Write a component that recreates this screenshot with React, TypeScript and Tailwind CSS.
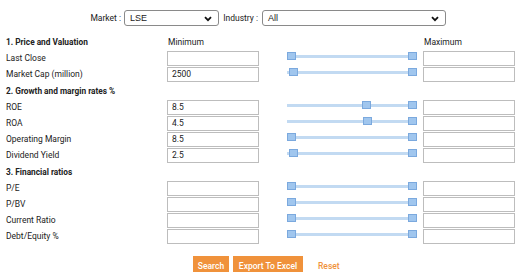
import React from "react";

const font = { fontFamily: "Roboto, 'Noto Sans', Arial, sans-serif" };

type Row = { label: string; value: string; l: number; r: number };

const sections: { title: string; rows: Row[] }[] = [
  {
    title: "1. Price and Valuation",
    rows: [
      { label: "Last Close", value: "", l: 0, r: 121 },
      { label: "Market Cap (million)", value: "2500", l: 2, r: 121 },
    ],
  },
  {
    title: "2. Growth and margin rates %",
    rows: [
      { label: "ROE", value: "8.5", l: 75, r: 121 },
      { label: "ROA", value: "4.5", l: 76, r: 121 },
      { label: "Operating Margin", value: "8.5", l: 0, r: 121 },
      { label: "Dividend Yield", value: "2.5", l: 2, r: 121 },
    ],
  },
  {
    title: "3. Financial ratios",
    rows: [
      { label: "P/E", value: "", l: 0, r: 121 },
      { label: "P/BV", value: "", l: 0, r: 121 },
      { label: "Current Ratio", value: "", l: 0, r: 121 },
      { label: "Debt/Equity %", value: "", l: 0, r: 121 },
    ],
  },
];

function Chevron() {
  return (
    <svg width="8" height="6" viewBox="0 0 8 6" className="pointer-events-none absolute right-[6px] top-[5px]">
      <path d="M1 1.2 L4 4.2 L7 1.2" fill="none" stroke="#111" strokeWidth="1.8" />
    </svg>
  );
}

function Slider({ l, r }: { l: number; r: number }) {
  return (
    <div className="relative h-[15px] w-[164px] shrink-0">
      <div className="absolute left-[28px] top-[4px] h-[3px] w-[129px] bg-[#c2daf2]" />
      <div
        className="absolute top-[1px] h-[8px] w-[9px] border border-[#7ba9de] bg-[#a0c6ee]"
        style={{ left: 28 + l }}
      />
      <div
        className="absolute top-[1px] h-[8px] w-[9px] border border-[#7ba9de] bg-[#a0c6ee]"
        style={{ left: 28 + r }}
      />
    </div>
  );
}

function Input({ value }: { value: string }) {
  return (
    <div className="flex h-[15px] w-[92px] shrink-0 items-center border border-[#bdbdbd] bg-white pl-[4px] text-[8.5px] text-[#222]">
      {value}
    </div>
  );
}

const selFont = { fontFamily: "'Liberation Sans', Arial, sans-serif" };

export default function App() {
  return (
    <div className="h-[272px] w-[520px] overflow-hidden bg-white text-[#222]" style={font}>
      <div className="flex h-[34px] items-start pt-[10px] text-[8.5px]">
        <span className="mt-[2px] w-[124px] shrink-0 whitespace-nowrap pr-[3px] text-right">Market :</span>
        <div className="relative h-[16px] w-[95px] shrink-0 rounded-[3px] border border-[#8a8a8a] bg-white pl-[5px] text-[9px] leading-[14px]" style={selFont}>
          LSE
          <Chevron />
        </div>
        <span className="mt-[2px] w-[43px] shrink-0 whitespace-nowrap pr-[4px] text-right">Industry :</span>
        <div className="relative h-[16px] w-[184px] shrink-0 rounded-[3px] border border-[#8a8a8a] bg-white pl-[5px] text-[9px] leading-[14px]" style={selFont}>
          All
          <Chevron />
        </div>
      </div>
      {sections.map((s, i) => (
        <div key={s.title} className="flex flex-col">
          <div className="flex h-[17px] items-center text-[8.5px]">
            <span className="w-[167px] shrink-0 pl-[6px] text-[8.3px] font-bold">{s.title}</span>
            {i === 0 && (
              <>
                <span className="w-[256px] shrink-0 pl-[1px]">Minimum</span>
                <span className="pl-[1px]">Maximum</span>
              </>
            )}
          </div>
          <div className="flex flex-col gap-[1px] pb-[1px]">
            {s.rows.map((r) => (
              <div key={r.label} className="flex h-[15px] items-center text-[8.5px]">
                <span className="w-[167px] shrink-0 pl-[6px]">{r.label}</span>
                <Input value={r.value} />
                <Slider l={r.l} r={r.r} />
                <Input value="" />
              </div>
            ))}
          </div>
        </div>
      ))}
      <div className="flex items-center pl-[193px] pt-[11px] text-[8.5px]">
        <button className="h-[20px] w-[36px] bg-[#f0923b] font-medium text-white">Search</button>
        <button className="ml-[4px] h-[20px] w-[70px] bg-[#f0923b] font-medium text-white">Export To Excel</button>
        <span className="ml-[15px] font-medium text-[#f0923b]">Reset</span>
      </div>
    </div>
  );
}
